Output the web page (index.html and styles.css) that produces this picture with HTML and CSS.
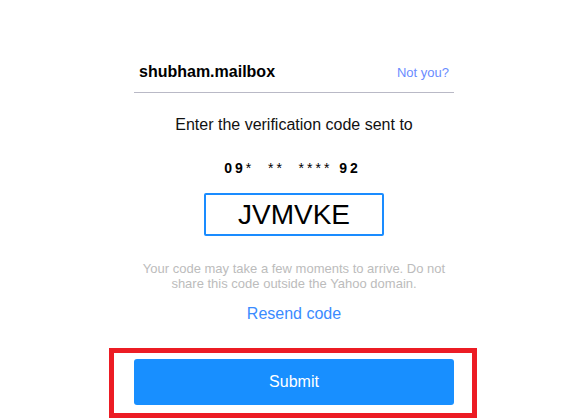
FILE: index.html
```html
<!DOCTYPE html>
<html>
<head>
<meta charset="utf-8">
<link rel="stylesheet" href="styles.css">
</head>
<body>
<main class="page">
  <div class="card">
    <div class="account-row">
      <span class="account-name">shubham.mailbox</span>
      <a class="not-you" href="#">Not you?</a>
    </div>
    <p class="prompt">Enter the verification code sent to</p>
    <p class="phone">09<span class="mask">*  **  ****</span> 92</p>
    <div class="code-box">JVMVKE</div>
    <p class="hint">Your code may take a few moments to arrive. Do not share this code outside the Yahoo domain.</p>
    <a class="resend" href="#">Resend code</a>
    <div class="highlight">
      <button class="submit" type="button">Submit</button>
    </div>
  </div>
</main>
</body>
</html>
```

FILE: styles.css
```css
html, body {
  margin: 0;
  padding: 0;
  background: #ffffff;
}

body {
  font-family: "Liberation Sans", Arial, sans-serif;
  color: #1a1a1a;
}

.page {
  display: flex;
  justify-content: center;
  padding-top: 62px;
}

.card {
  width: 320px;
  display: flex;
  flex-direction: column;
  align-items: center;
}

.account-row {
  align-self: stretch;
  display: flex;
  justify-content: space-between;
  align-items: baseline;
  padding: 0 5px 9px 5px;
  border-bottom: 1px solid #b9b9c6;
  line-height: 20px;
}

.account-name {
  font-size: 16px;
  font-weight: bold;
  color: #000000;
}

.not-you {
  font-size: 13px;
  color: #6a8cff;
  text-decoration: none;
}

.prompt {
  margin: 22px 0 0 0;
  font-size: 16px;
  line-height: 20px;
  color: #111111;
}

.phone {
  margin: 24px 0 0 0;
  font-size: 14px;
  line-height: 18px;
  font-weight: bold;
  letter-spacing: 3px;
  white-space: pre;
  color: #000000;
  padding-right: 3px;
}

.mask {
  font-weight: normal;
}

.code-box {
  margin-top: 16px;
  width: 176px;
  height: 39px;
  border: 2px solid #1a8cff;
  border-radius: 2px;
  font-size: 28px;
  line-height: 39px;
  text-align: center;
  color: #000000;
}

.hint {
  margin: 25px 0 0 0;
  font-size: 13px;
  line-height: 15px;
  color: #bcbcbc;
  text-align: center;
}

.resend {
  margin-top: 13px;
  font-size: 16px;
  line-height: 20px;
  color: #3a8bff;
  text-decoration: none;
}

.highlight {
  align-self: stretch;
  margin: 24px -23px 0 -25px;
  border: 5px solid #ec1c24;
  padding: 6px 18px 8px 20px;
  display: flex;
}

.submit {
  flex: 1;
  height: 46px;
  border: none;
  border-radius: 3px;
  background: #188fff;
  color: #ffffff;
  font-family: "Liberation Sans", Arial, sans-serif;
  font-size: 16px;
  line-height: 46px;
  padding: 0;
}
```
